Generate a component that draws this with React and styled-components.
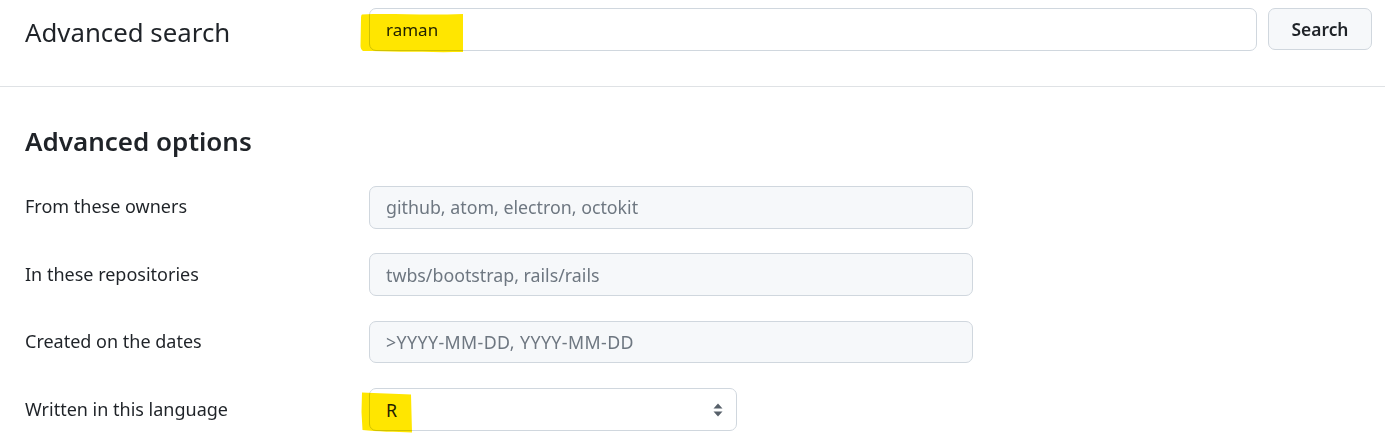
import React from "react";
import styled, { createGlobalStyle } from "styled-components";

const Global = createGlobalStyle`
  html, body { margin: 0; padding: 0; background: #ffffff; }
  body {
    font-family: "Noto Sans", "Open Sans", sans-serif;
    color: #1f2328;
    -webkit-font-smoothing: antialiased;
  }
  * { box-sizing: border-box; }
`;

const Page = styled.div`
  width: 1385px;
  height: 447px;
  overflow: hidden;
  background: #fff;
`;

const Header = styled.header`
  display: grid;
  grid-template-columns: 333px 1fr 104px;
  column-gap: 11px;
  align-items: start;
  height: 87px;
  padding: 8px 13px 0 25px;
  border-bottom: 1px solid #dfe2e5;
`;

const Title = styled.h1`
  margin: 0;
  padding-top: 4px;
  font-size: 25.8px;
  line-height: 40px;
  font-weight: 400;
  color: #1f2328;
`;

const Field = styled.div`
  position: relative;
  width: ${(p) => p.$width || "100%"};
`;

const TextInput = styled.div`
  display: flex;
  align-items: center;
  height: ${(p) => p.$h || 42.5}px;
  padding: 0 16px;
  border: 1px solid #d0d7de;
  border-radius: 7px;
  background: ${(p) => (p.$muted ? "#f6f8fa" : "#ffffff")};
  font-size: ${(p) => p.$size || 17.8}px;
  letter-spacing: ${(p) => p.$spacing || 0}px;
  color: ${(p) => (p.$placeholder ? "#6e7781" : "#1f2328")};
  white-space: nowrap;
`;

const Button = styled.button`
  height: 42px;
  width: 104px;
  border: 1px solid #d0d7de;
  border-radius: 7px;
  background: #f6f8fa;
  font-family: inherit;
  font-size: 17.4px;
  font-weight: 600;
  color: #1f2328;
  padding: 0;
  cursor: pointer;
`;

const Section = styled.section`
  padding: 36px 0 0 25px;
`;

const Heading = styled.h2`
  margin: 0 0 27px 0;
  font-size: 26px;
  line-height: 36px;
  font-weight: 600;
  color: #1f2328;
`;

const Rows = styled.div`
  display: grid;
  grid-template-columns: 344px 604px;
  row-gap: 24.9px;
  align-items: center;
`;

const Label = styled.label`
  font-size: 18px;
  color: #1f2328;
  padding-bottom: 2px;
`;

const SelectBox = styled(TextInput)`
  justify-content: space-between;
  padding-right: 13px;
  height: 43px;
`;

const Highlight = styled.svg`
  position: absolute;
  left: ${(p) => p.$x}px;
  top: ${(p) => p.$y}px;
  mix-blend-mode: multiply;
  pointer-events: none;
`;

const Arrows = () => (
  <svg width="10" height="14" viewBox="0 0 10 14">
    <path d="M5 0.5 L9.5 5.5 H0.5 Z" fill="#57606a" />
    <path d="M5 13.5 L9.5 8.5 H0.5 Z" fill="#57606a" />
  </svg>
);

export default function App() {
  return (
    <Page>
      <Global />
      <Header>
        <Title>Advanced search</Title>
        <Field>
          <TextInput $size={17}>raman</TextInput>
          <Highlight $x={-9} $y={5} width="104" height="40" viewBox="0 0 104 40">
            <path
              d="M2 1.5 C30 0 60 2.5 103 1 L103 39 C70 39.5 30 38.5 3 38 C1.5 37 0.5 35 0.5 33 L1 6 C1 3.5 1.2 2 2 1.5 Z"
              fill="#ffe600"
            />
          </Highlight>
        </Field>
        <Button>Search</Button>
      </Header>
      <Section>
        <Heading>Advanced options</Heading>
        <Rows>
          <Label>From these owners</Label>
          <TextInput $muted $placeholder>github, atom, electron, octokit</TextInput>
          <Label>In these repositories</Label>
          <TextInput $muted $placeholder>twbs/bootstrap, rails/rails</TextInput>
          <Label>Created on the dates</Label>
          <TextInput $muted $placeholder $spacing={0.4}>&gt;YYYY-MM-DD, YYYY-MM-DD</TextInput>
          <Label>Written in this language</Label>
          <Field $width="368px">
            <SelectBox>
              <span>R</span>
              <Arrows />
            </SelectBox>
            <Highlight $x={-8} $y={4} width="52" height="41" viewBox="0 0 52 41">
              <path
                d="M1 0.5 C15 1 35 2 50 2.5 L51 40.5 C35 40 15 39.5 1.5 38 L0.5 20 Z"
                fill="#ffe600"
              />
            </Highlight>
          </Field>
        </Rows>
      </Section>
    </Page>
  );
}
